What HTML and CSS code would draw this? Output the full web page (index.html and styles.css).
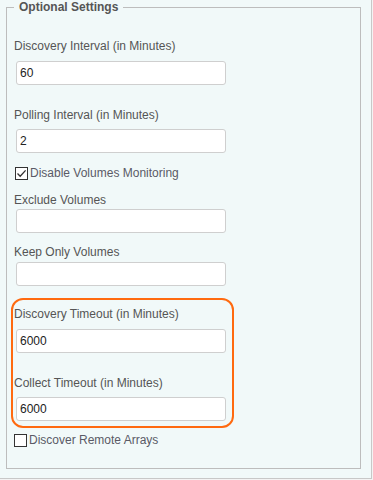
FILE: index.html
```html
<!DOCTYPE html>
<html>
<head>
<meta charset="utf-8">
<link rel="stylesheet" href="styles.css">
</head>
<body>
<div class="panel">
  <fieldset class="settings">
    <legend class="settings-title">Optional Settings</legend>

    <div class="field field-wide">
      <label class="field-label">Discovery Interval (in Minutes)</label>
      <input class="field-input" type="text" value="60">
    </div>

    <div class="field field-wide field-next">
      <label class="field-label">Polling Interval (in Minutes)</label>
      <input class="field-input" type="text" value="2">
    </div>

    <div class="check-row check-first">
      <span class="check-box checked">
        <svg width="11" height="11" viewBox="0 0 11 11"><path d="M1.5 5.5 L4.2 8.3 L9.6 2.4" fill="none" stroke="#333" stroke-width="1.3"/></svg>
      </span>
      <span class="check-label">Disable Volumes Monitoring</span>
    </div>

    <div class="field field-tight">
      <label class="field-label">Exclude Volumes</label>
      <input class="field-input" type="text" value="">
    </div>

    <div class="field field-tight field-next-tight">
      <label class="field-label">Keep Only Volumes</label>
      <input class="field-input" type="text" value="">
    </div>

    <div class="highlight">
      <div class="field field-wide">
        <label class="field-label">Discovery Timeout (in Minutes)</label>
        <input class="field-input" type="text" value="6000">
      </div>
      <div class="field field-wide field-next">
        <label class="field-label">Collect Timeout (in Minutes)</label>
        <input class="field-input" type="text" value="6000">
      </div>
    </div>

    <div class="check-row check-last">
      <span class="check-box"></span>
      <span class="check-label">Discover Remote Arrays</span>
    </div>
  </fieldset>
</div>
</body>
</html>
```

FILE: styles.css
```css
html, body {
  margin: 0;
  padding: 0;
  background: #f3f3f3;
}

body {
  font-family: "Liberation Sans", Arial, sans-serif;
  font-size: 12px;
  color: #555;
}

.panel {
  width: 372px;
  height: 479px;
  box-sizing: border-box;
  background: #f1f9f9;
  border-right: 1px solid #c8c8c8;
  border-bottom: 1px solid #c8c8c8;
  padding-left: 6px;
}

.settings {
  margin: 0;
  width: 355px;
  height: 469px;
  box-sizing: border-box;
  border: 1px solid #bdbdbd;
  padding: 24px 7px 20px 7px;
}

.settings-title {
  font-weight: bold;
  font-size: 12px;
  line-height: 14px;
  color: #555;
  padding: 0 5px;
  margin-left: 0;
}

.field {
  display: flex;
  flex-direction: column;
  align-items: flex-start;
}

.field-label {
  line-height: 16px;
  height: 16px;
  color: #555;
  white-space: nowrap;
}

.field-input {
  margin: 0 0 0 2px;
  width: 210px;
  height: 24px;
  box-sizing: border-box;
  border: 1px solid #cfcfcf;
  border-radius: 3px;
  background: #fff;
  padding: 0 3px;
  font-family: "Liberation Sans", Arial, sans-serif;
  font-size: 12px;
  color: #222;
  outline: none;
}

.field-wide .field-input {
  margin-top: 7px;
}

.field-next {
  margin-top: 22px;
}

.field-next .field-input {
  margin-top: 6px;
}

.field-tight {
  margin-top: 11px;
}

.field-tight .field-input {
  margin-top: 1px;
}

.field-next-tight .field-input {
  margin-top: 2px;
}

.check-row {
  display: flex;
  align-items: center;
  height: 16px;
  white-space: nowrap;
}

.check-first {
  margin-top: 12px;
  padding-left: 1px;
}

.check-last {
  margin-top: 4px;
}

.check-box {
  display: inline-flex;
  align-items: center;
  justify-content: center;
  width: 13px;
  height: 13px;
  box-sizing: border-box;
  border: 1px solid #333;
  background: #fff;
  margin-right: 2px;
}

.check-label {
  color: #5a5a66;
}

.highlight {
  margin: 12px 0 0 -3px;
  width: 223px;
  box-sizing: border-box;
  border: 2px solid #ff6a10;
  border-radius: 12px;
  padding: 6px 0 5px 1px;
}
```
